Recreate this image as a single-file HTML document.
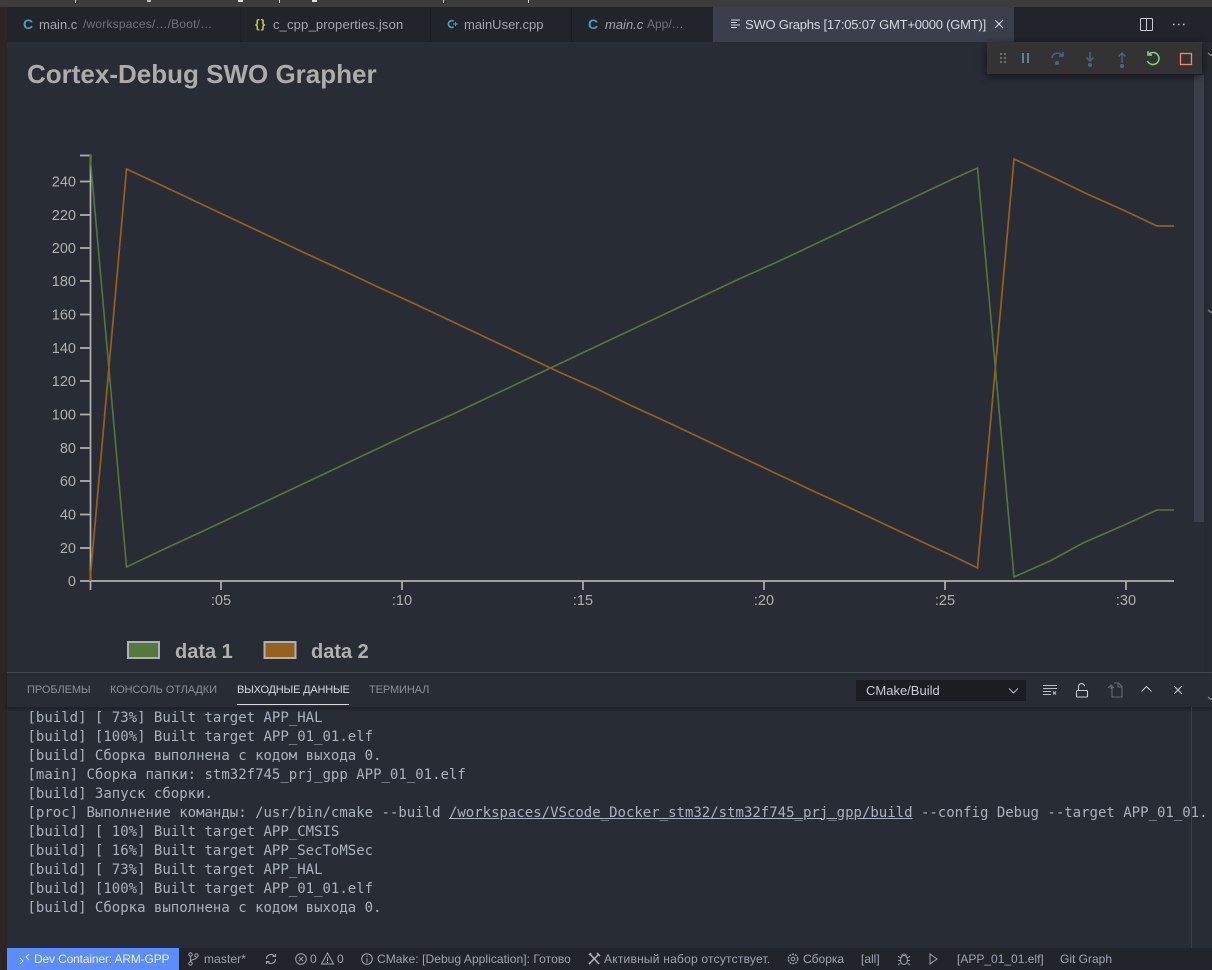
<!DOCTYPE html>
<html><head><meta charset="utf-8"><style>
html,body{margin:0;padding:0;background:#282c34}
body{width:1212px;height:970px;position:relative;overflow:hidden;font-family:"Liberation Sans","Noto Sans CJK SC",sans-serif}
.a{position:absolute;white-space:nowrap}
.tab{font-size:13px;line-height:35px;top:7px;color:#a2a5ab}
.sep{position:absolute;top:7px;width:1px;height:35px;background:#1b1e23}
.ph{top:673px;line-height:34px;font-size:11px;color:#8b919b}
.out{left:27.500px;top:708.500px;font:14px/19px "DejaVu Sans Mono","Liberation Mono",monospace;color:#abb2bf;white-space:pre;position:absolute;z-index:3}
.st{top:948px;line-height:22px;font-size:12px;color:#9da5b4}
svg{position:absolute;overflow:visible}
</style></head><body>
<div class="a" style="left:0;top:0;width:7px;height:970px;background:#2b2526"></div>
<div class="a" style="left:0;top:0;width:1212px;height:7px;background:#3c3c3c"></div>
<div class="a" style="left:7px;top:7px;width:1205px;height:35px;background:#21252b"></div>

<div class="a" style="left:75px;top:0;width:1px;height:3px;background:#ddd"></div>
<div class="a" style="left:147px;top:0;width:4px;height:2px;background:#bbb"></div>
<div class="a" style="left:238px;top:0;width:5px;height:2px;background:#ddd"></div>
<div class="a" style="left:279px;top:0;width:1px;height:3px;background:#ddd"></div>
<div class="a" style="left:312px;top:0;width:5px;height:2px;background:#ddd"></div>
<div class="a" style="left:443px;top:0;width:1px;height:3px;background:#ddd"></div>
<div class="a" style="left:528px;top:0;width:1px;height:3px;background:#ddd"></div>

<div class="sep" style="left:240px"></div><div class="sep" style="left:430px"></div><div class="sep" style="left:571px"></div>
<div class="a" style="left:713px;top:7px;width:301px;height:35px;background:#3a3f4b"></div>

<div class="a tab" style="left:23px;color:#519aba;font-weight:700;font-size:14px">C</div>
<div class="a tab" style="left:39px">main.c</div>
<div class="a tab" style="left:83px;font-size:12px;color:#6f747c;letter-spacing:.2px">/workspaces/…/Boot/…</div>
<div class="a tab" style="left:255px;color:#cbcb41;font-weight:700;font-size:12px;letter-spacing:1px">{}</div>
<div class="a tab" style="left:273px;letter-spacing:.15px">c_cpp_properties.json</div>
<svg style="left:447px;top:19px" width="12" height="10" viewBox="0 0 12 10"><path d="M6.500 2.200A3.300 3.300 0 1 0 6.500 7.800" fill="none" stroke="#519aba" stroke-width="1.800"/><path d="M6 5H11M8.500 3V7" stroke="#519aba" stroke-width="1"/></svg>
<div class="a tab" style="left:464px">mainUser.cpp</div>
<div class="a tab" style="left:588px;color:#519aba;font-weight:700;font-size:14px">C</div>
<div class="a tab" style="left:605px;font-style:italic">main.c</div>
<div class="a tab" style="left:647px;font-size:12px;color:#6f747c">App/…</div>

<svg style="left:731px;top:19px" width="10" height="10" viewBox="0 0 10 10"><path d="M0 1H9M0 3.500H6M0 6H9M0 8.500H6" stroke="#d7dae0" stroke-width="1"/></svg>
<div class="a tab" style="left:745px;color:#d7dae0;letter-spacing:-.22px">SWO Graphs [17:05:07 GMT+0000 (GMT)]</div>
<svg style="left:994px;top:19px" width="10" height="10" viewBox="0 0 10 10"><path d="M1 1L9 9M9 1L1 9" stroke="#d7dae0" stroke-width="1.200"/></svg>
<svg style="left:1140px;top:18px" width="13" height="13" viewBox="0 0 13 13"><rect x=".5" y=".5" width="12" height="12" rx="1" fill="none" stroke="#c8ccd3"/><path d="M6.500 1V12" stroke="#c8ccd3"/></svg>
<svg style="left:1172px;top:23px" width="13" height="3" viewBox="0 0 13 3"><path d="M1 1.500h1.500M6 1.500h1.500M11 1.500h1.500" stroke="#c8ccd3" stroke-width="1.400"/></svg>

<div class="a" style="left:27px;top:58px;font-size:26px;line-height:32px;font-weight:700;color:#acacac">Cortex-Debug SWO Grapher</div>

<div class="a" style="left:1194px;top:75px;width:10px;height:447px;background:#3a3f4b"></div>
<div class="a" style="left:1204px;top:42px;width:8px;height:630px;background:#262a31"></div>
<svg style="left:1208px;top:52px" width="4" height="4" viewBox="0 0 4 4"><path d="M0 1L3 3.500 6 1" fill="none" stroke="#9aa0a8"/></svg>
<svg style="left:1208px;top:309px" width="4" height="4" viewBox="0 0 4 4"><path d="M0 1L3 3.500 6 1" fill="none" stroke="#9aa0a8"/></svg>

<svg style="left:0;top:0" width="1212" height="672" viewBox="0 0 1212 672">
<g stroke="#b0b0b0" stroke-width="1.700" fill="none">
<path d="M80 155.500H90.500V581M80 181.500H90M80 215H90M80 248H90M80 281H90M80 314.500H90M80 348H90M80 381H90M80 414.500H90M80 448H90M80 481H90M80 514.500H90M80 548H90"/>
<path d="M80 581H1174M90.500 581V590M221 581V590M402 581V590M583 581V590M764 581V590M945 581V590M1126 581V590"/>
</g>
<g font-family="Liberation Sans,sans-serif" font-size="14.500" fill="#b0b0b0" text-anchor="end">
<text x="76" y="186.500">240</text><text x="76" y="220">220</text><text x="76" y="253">200</text><text x="76" y="286">180</text><text x="76" y="319.500">160</text><text x="76" y="353">140</text><text x="76" y="386">120</text><text x="76" y="419.500">100</text><text x="76" y="453">80</text><text x="76" y="486">60</text><text x="76" y="519.500">40</text><text x="76" y="553">20</text><text x="76" y="586">0</text>
</g>
<g font-family="Liberation Sans,sans-serif" font-size="14.500" fill="#b0b0b0" text-anchor="middle">
<text x="221" y="605">:05</text><text x="402" y="605">:10</text><text x="583" y="605">:15</text><text x="764" y="605">:20</text><text x="945" y="605">:25</text><text x="1126" y="605">:30</text>
</g>
<polyline fill="none" stroke="#54783c" stroke-width="1.600" points="90,155 126.500,567 162,550 199,533 235,516 271,499 307,482 343,465 379,448 415,431 451,415 487,398 523,381 559,364 595,347 631,330 667,313 703,296 739,279 775,263 811,246 847,229 883,212 919,195 955,178 977.500,168 1014,577 1050,561 1083,543 1122,526 1157,510 1174,510"/>
<polyline fill="none" stroke="#96601f" stroke-width="1.700" points="90,581 126.500,169 163,186 199,203 235,220 271,237 307,254 343,270.500 379,287.500 415,304 451,321 487,338 523,355 559,372 595,388 631,405.500 667,422 703,439 739,456 775,473 811,490 847,506.500 883,523.500 919,540.500 955,557 977.500,568 1014,159 1050,176 1085,193 1122,209.500 1157,226 1174,226"/>
<rect x="128" y="642" width="31" height="16" fill="#54783f" stroke="#b0b0b0" stroke-width="2"/>
<rect x="264.500" y="642" width="31" height="16" fill="#97601f" stroke="#b0b0b0" stroke-width="2"/>
<g font-family="Liberation Sans,sans-serif" font-size="20" font-weight="700" fill="#b0b0b0"><text x="175" y="658">data 1</text><text x="311" y="658">data 2</text></g>
</svg>

<div class="a" style="left:987px;top:42px;width:215px;height:32px;background:#333333;box-shadow:0 2px 8px rgba(0,0,0,.6)"></div>
<svg style="left:987px;top:42px" width="215" height="32" viewBox="0 0 215 32">
<path d="M13 12h2M17 12h2M13 16h2M17 16h2M13 20h2M17 20h2" stroke="#858585" stroke-width="1.500"/>
<path d="M36 11V21M41 11V21" stroke="#75beff" stroke-width="1.500" opacity=".75"/>
<g fill="none" stroke="#47678a" stroke-width="1.400">
<path d="M65 16a5.500 5.500 0 0 1 10-2.500M76 10v4h-4"/>
<path d="M103 10v9M99.500 15.500L103 19l3.500-3.500"/>
<path d="M135 21V11M131.500 14.500L135 11l3.500 3.500"/>
</g>
<g fill="#47678a"><circle cx="70" cy="21" r="2"/><circle cx="103" cy="23" r="2"/><circle cx="135" cy="24" r="2"/></g>
<path d="M162 12a6 6 0 1 1-1.500 7M161 9v4h4" fill="none" stroke="#89d185" stroke-width="1.500"/>
<rect x="193.500" y="11.500" width="11" height="11" fill="none" stroke="#f48771" stroke-width="1.300"/>
</svg>

<div class="a" style="left:7px;top:672px;width:1205px;height:1px;background:#44484f"></div>
<div class="a" style="left:7px;top:673px;width:1205px;height:34px;background:#282c34;box-shadow:0 2px 3px rgba(0,0,0,.3);z-index:1"></div>
<div class="a ph" style="left:27px;z-index:2;letter-spacing:-.08px">ПРОБЛЕМЫ</div>
<div class="a ph" style="left:110px;z-index:2;letter-spacing:-.08px">КОНСОЛЬ ОТЛАДКИ</div>
<div class="a ph" style="left:237px;color:#d7dae0;z-index:2;letter-spacing:-.2px">ВЫХОДНЫЕ ДАННЫЕ</div>
<div class="a" style="left:237px;top:704px;width:112px;height:1px;background:#d7dae0;z-index:2"></div>
<div class="a ph" style="left:369px;z-index:2;letter-spacing:-.1px">ТЕРМИНАЛ</div>
<div class="a" style="left:856px;top:680px;width:170px;height:21px;background:#1b1d23;z-index:2;color:#c8ccd3;font-size:13px;line-height:21px;text-indent:10px">CMake/Build</div>
<svg style="left:1008px;top:687px;z-index:3" width="12" height="8" viewBox="0 0 12 8"><path d="M1 1.500L5.500 6 10 1.500" fill="none" stroke="#b0b4ba" stroke-width="1.100"/></svg>
<svg style="left:1042px;top:684px;z-index:3" width="15" height="12" viewBox="0 0 15 12"><path d="M1 1.500H15M1 4.500H15M1 7.500H9M1 10.500H9" stroke="#b8bcc4" stroke-width="1"/><path d="M11 7.500l3 3M14 7.500l-3 3" stroke="#b8bcc4" stroke-width="1.200"/></svg>
<svg style="left:1075px;top:683px;z-index:3" width="14" height="15" viewBox="0 0 14 15"><rect x="1.500" y="7.500" width="11" height="6.500" rx="1" fill="none" stroke="#c8ccd3" stroke-width="1.100"/><path d="M3.500 7.500V4a3 3 0 0 1 6-.8" fill="none" stroke="#c8ccd3" stroke-width="1.100"/></svg>
<svg style="left:1107px;top:682px;z-index:3" width="16" height="16" viewBox="0 0 16 16"><path d="M5 5v10h10V4.500L11.500 1H7M11 1v4h4M1 6l3-3 3 3M4 3v4" fill="none" stroke="#666a71" stroke-width="1.100"/></svg>
<svg style="left:1141px;top:685px;z-index:3" width="11" height="8" viewBox="0 0 11 8"><path d="M.5 6.500L5.500 1.500l5 5" fill="none" stroke="#c8ccd3" stroke-width="1.100"/></svg>
<svg style="left:1173px;top:685px;z-index:3" width="10" height="10" viewBox="0 0 10 10"><path d="M1 1l8 8M9 1L1 9" stroke="#c8ccd3" stroke-width="1.100"/></svg>
<svg style="left:1208px;top:696px;z-index:3" width="4" height="4" viewBox="0 0 4 4"><path d="M0 1L3 3.500 6 1" fill="none" stroke="#9aa0a8"/></svg>

<div class="a" style="left:1191px;top:707px;width:1px;height:241px;background:#3a3f4b;z-index:2"></div>
<div class="out">[build] [ 73%] Built target APP_HAL
[build] [100%] Built target APP_01_01.elf
[build] Сборка выполнена с кодом выхода 0.
[main] Сборка папки: stm32f745_prj_gpp APP_01_01.elf
[build] Запуск сборки.
[proc] Выполнение команды: /usr/bin/cmake --build <span style="text-decoration:underline">/workspaces/VScode_Docker_stm32/stm32f745_prj_gpp/build</span> --config Debug --target APP_01_01.
[build] [ 10%] Built target APP_CMSIS
[build] [ 16%] Built target APP_SecToMSec
[build] [ 73%] Built target APP_HAL
[build] [100%] Built target APP_01_01.elf
[build] Сборка выполнена с кодом выхода 0.</div>

<div class="a" style="left:7px;top:948px;width:1205px;height:22px;background:#21252b;z-index:2"></div>
<div class="a" style="left:7px;top:948px;width:172px;height:22px;background:#5c8dff;z-index:2"></div>
<div style="z-index:3;position:absolute;left:0;top:0">
<svg style="left:19px;top:953px" width="11" height="12" viewBox="0 0 11 12"><path d="M1 5L4 8 1 11M10 1L7 4l3 3" fill="none" stroke="#e6ecff" stroke-width="1"/></svg>
<div class="a st" style="left:34px;color:#f0f3ff;letter-spacing:-.15px">Dev Container: ARM-GPP</div>
<svg style="left:188px;top:952px" width="11" height="14" viewBox="0 0 11 14"><circle cx="2.500" cy="2.500" r="1.700" fill="none" stroke="#9da5b4"/><circle cx="8.500" cy="3.500" r="1.700" fill="none" stroke="#9da5b4"/><circle cx="2.500" cy="11.500" r="1.700" fill="none" stroke="#9da5b4"/><path d="M2.500 4.200V9.800M8.500 5.200C8.500 8 2.500 7 2.500 9.500" fill="none" stroke="#9da5b4"/></svg>
<div class="a st" style="left:204px;letter-spacing:.1px">master*</div>
<svg style="left:264px;top:953px" width="14" height="12" viewBox="0 0 14 12"><path d="M2.500 6a4.500 4.500 0 0 1 8-2.800M11.500 6a4.500 4.500 0 0 1-8 2.800M8.500 3.500h3V1M5.500 8.500h-3V11" fill="none" stroke="#9da5b4" stroke-width="1.100"/></svg>
<svg style="left:295px;top:953px" width="12" height="12" viewBox="0 0 12 12"><circle cx="6" cy="6" r="5.300" fill="none" stroke="#9da5b4"/><path d="M3.800 3.800l4.400 4.400M8.200 3.800L3.800 8.200" stroke="#9da5b4"/></svg>
<div class="a st" style="left:310px">0</div>
<svg style="left:321px;top:952px" width="13" height="13" viewBox="0 0 13 13"><path d="M6.500 1L12.500 12H.5ZM6.500 5V9M6.500 10V11" fill="none" stroke="#9da5b4"/></svg>
<div class="a st" style="left:337px">0</div>
<svg style="left:361px;top:953px" width="12" height="12" viewBox="0 0 12 12"><circle cx="6" cy="6" r="5.300" fill="none" stroke="#9da5b4"/><path d="M6 5V9.500M6 2.500V4" stroke="#9da5b4"/></svg>
<div class="a st" style="left:377px;letter-spacing:.06px">CMake: [Debug Application]: Готово</div>
<svg style="left:588px;top:952px" width="13" height="13" viewBox="0 0 13 13"><path d="M1 12L11 2M2 2l9 10M9 1l3 3M1 3l2-2" fill="none" stroke="#b0b6c0" stroke-width="1.500"/></svg>
<div class="a st" style="left:604px;letter-spacing:.22px">Активный набор отсутствует.</div>
<svg style="left:787px;top:953px" width="12" height="12" viewBox="0 0 12 12"><circle cx="6" cy="6" r="4.700" fill="none" stroke="#9da5b4" stroke-width="1.400" stroke-dasharray="2 1"/><circle cx="6" cy="6" r="1.800" fill="none" stroke="#9da5b4"/></svg>
<div class="a st" style="left:803px">Сборка</div>
<div class="a st" style="left:861px">[all]</div>
<svg style="left:898px;top:952px" width="12" height="14" viewBox="0 0 12 14"><ellipse cx="6" cy="8" rx="3.500" ry="4.500" fill="none" stroke="#9da5b4"/><path d="M3.500 4.500a2.500 2.500 0 0 1 5 0M0 4l2.500 2M12 4L9.500 6M0 8.500h2.500M9.500 8.500H12M0 13l2.500-2M12 13l-2.500-2" fill="none" stroke="#9da5b4" stroke-width=".9"/></svg>
<svg style="left:929px;top:953px" width="9" height="12" viewBox="0 0 9 12"><path d="M1 1L8 6 1 11Z" fill="none" stroke="#9da5b4"/></svg>
<div class="a st" style="left:957px">[APP_01_01.elf]</div>
<div class="a st" style="left:1060px">Git Graph</div>
</div>
</body></html>
